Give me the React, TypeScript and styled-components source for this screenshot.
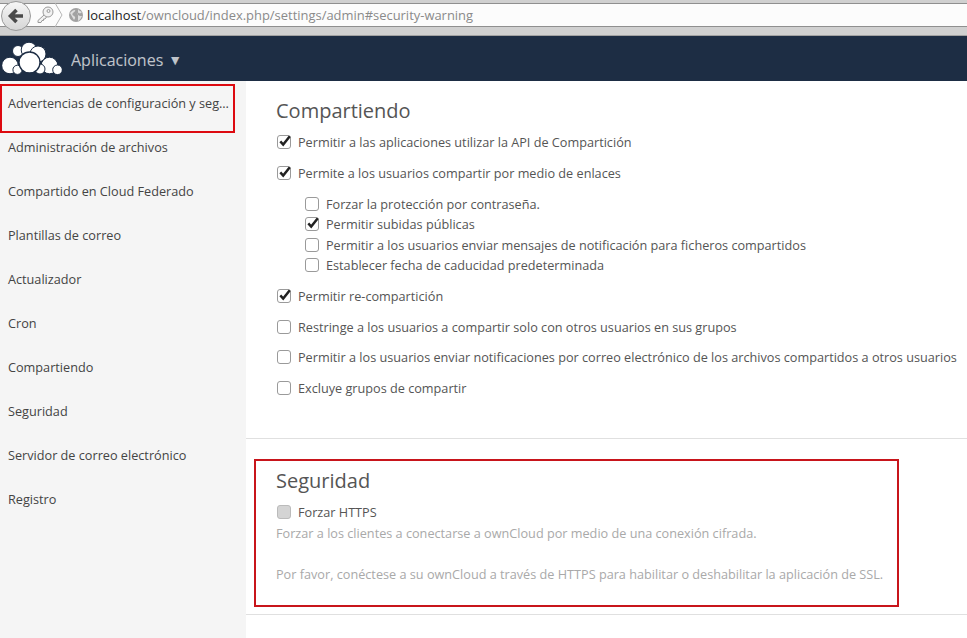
import React from "react";
import styled, { createGlobalStyle } from "styled-components";

const Global = createGlobalStyle`
  html, body { margin: 0; padding: 0; background: #fff; overflow: hidden; }
  body { font-family: "Open Sans", "Noto Sans", sans-serif; font-size: 12.68px; color: #555; }
`;
const Page = styled.div`
  position: relative; width: 967px; height: 638px; display: flex; flex-direction: column; overflow: hidden;
`;
const BrowserBar = styled.div`
  height: 36px; flex: none; box-sizing: border-box; background: #d0d0d0; border-bottom: 1px solid #a2a2a2;
  padding-top: 3px; position: relative;
`;
const UrlField = styled.div`
  height: 24px; box-sizing: border-box; background: #fcfcfc; border-top: 1px solid #8f8f8f; border-bottom: 1px solid #8f8f8f;
  display: flex; align-items: center; padding-left: 69px; gap: 4px; font-size: 12.95px; color: #8a8a8a;
`;
const UrlHost = styled.span` color: #222; `;
const BackButton = styled.div`
  position: absolute; left: 1px; top: 1px; width: 30px; height: 30px; border-radius: 50%; box-sizing: border-box;
  border: 1px solid #9a9a9a; background: linear-gradient(#f6f6f6, #d6d6d6);
  display: flex; align-items: center; justify-content: center;
`;
const KeyIcon = styled.svg` position: absolute; left: 36px; top: 5px; `;
const Chevron = styled.svg` position: absolute; left: 55px; top: 3px; `;
const Header = styled.header`
  height: 45px; flex: none; background: #1d2d44; display: flex; align-items: center; padding-left: 2px;
`;
const AppMenu = styled.div`
  margin-left: 9px; font-size: 16px; color: #fff; opacity: .72; display: flex; align-items: center; gap: 5px; padding-top: 3px;
`;
const Caret = styled.span` font-size: 14px; margin-top: -2px; `;
const Body = styled.div` flex: 1; display: flex; min-height: 0; `;
const Sidebar = styled.nav` width: 246px; flex: none; background: #f5f5f5; `;
const NavItem = styled.div`
  height: 44px; line-height: 44px; padding-left: 8px; padding-right: 16px; color: #444;
  white-space: nowrap; overflow: hidden; text-overflow: ellipsis;
`;
const Main = styled.main` flex: 1; min-width: 0; `;
const Section = styled.section<{ $h: number; $top: number }>`
  height: ${p => p.$h}px; box-sizing: border-box; padding: ${p => p.$top}px 0 0 30px; border-bottom: 1px solid #e0e0e0;
`;
const Title = styled.h2<{ $gap: number }>`
  margin: 0 0 ${p => p.$gap}px; font-size: 20px; font-weight: 400; line-height: 27px; color: #555;
`;
const Row = styled.label<{ $sub?: boolean; $gap?: number }>`
  display: flex; align-items: center; height: 20px; white-space: nowrap;
  margin-left: ${p => (p.$sub ? 29 : 1)}px; margin-top: ${p => p.$gap ?? 0}px; color: #555; gap: 7px;
`;
const Box = styled.span<{ $disabled?: boolean }>`
  width: 14px; height: 14px; flex: none; box-sizing: border-box; border-radius: 3px; position: relative;
  border: 1px solid ${p => (p.$disabled ? "#bbb" : "#9a9a9a")};
  background: ${p => (p.$disabled ? "#d4d4d4" : "#fff")};
`;
const Tick = styled.svg` position: absolute; left: -1px; top: -3px; `;
const Hint = styled.p<{ $gap: number }>`
  margin: ${p => p.$gap}px 0 0; height: 20px; line-height: 20px; color: #a9a9a9; white-space: nowrap;
`;
const Highlight = styled.div<{ $x: number; $y: number; $w: number; $h: number; $c: string }>`
  position: absolute; left: ${p => p.$x}px; top: ${p => p.$y}px; width: ${p => p.$w}px; height: ${p => p.$h}px;
  box-sizing: border-box; border: 2px solid ${p => p.$c}; pointer-events: none;
`;

const Check = ({ on, disabled }: { on?: boolean; disabled?: boolean }) => (
  <Box $disabled={disabled}>
    {on && (
      <Tick width="15" height="15" viewBox="0 0 15 15">
        <path d="M3.300 8.300 6.200 11.500 12.800 3.300" fill="none" stroke="#222" strokeWidth="2.500" />
      </Tick>
    )}
  </Box>
);

const nav = [
  "Advertencias de configuración y seguridad",
  "Administración de archivos",
  "Compartido en Cloud Federado",
  "Plantillas de correo",
  "Actualizador",
  "Cron",
  "Compartiendo",
  "Seguridad",
  "Servidor de correo electrónico",
  "Registro",
];

type Opt = { t: string; on?: boolean; sub?: boolean; gap?: number };
const opts: Opt[] = [
  { t: "Permitir a las aplicaciones utilizar la API de Compartición", on: true },
  { t: "Permite a los usuarios compartir por medio de enlaces", on: true, gap: 11 },
  { t: "Forzar la protección por contraseña.", sub: true, gap: 11 },
  { t: "Permitir subidas públicas", on: true, sub: true, gap: 0 },
  { t: "Permitir a los usuarios enviar mensajes de notificación para ficheros compartidos", sub: true, gap: 1 },
  { t: "Establecer fecha de caducidad predeterminada", sub: true, gap: 0 },
  { t: "Permitir re-compartición", on: true, gap: 11 },
  { t: "Restringe a los usuarios a compartir solo con otros usuarios en sus grupos", gap: 11 },
  { t: "Permitir a los usuarios enviar notificaciones por correo electrónico de los archivos compartidos a otros usuarios", gap: 10 },
  { t: "Excluye grupos de compartir", gap: 11 },
];

const Logo = () => (
  <svg width="60" height="34" viewBox="0 0 60 34">
    <g fill="#fff" stroke="#1d2d44" strokeWidth="1">
      <circle cx="16" cy="9" r="5.500" />
      <circle cx="27" cy="8" r="7.800" />
      <circle cx="36" cy="12" r="8" />
      <circle cx="8" cy="23.500" r="8.300" />
      <circle cx="47.500" cy="23.500" r="8.300" />
      <circle cx="55.500" cy="27.800" r="4.800" />
      <circle cx="15.500" cy="27.800" r="4.600" />
      <circle cx="38" cy="27" r="5" />
    </g>
    <circle cx="27.500" cy="20.500" r="10.500" fill="#fff" stroke="#1d2d44" strokeWidth="1.300" />
  </svg>
);

export default function App() {
  return (
    <Page>
      <Global />
      <BrowserBar>
        <UrlField>
          <svg width="14" height="14" viewBox="0 0 14 14">
            <circle cx="7" cy="7" r="7" fill="#a2a2a2" />
            <path d="M1 5c2-2 3-3 5-3 1 1-1 2-2 3s-1 2 1 3 1 3 0 4M9 1c1 2 3 2 4 3-1 1-2 2-3 1s-2 1-1 2 3 1 4 1c-1 2-2 4-4 5" fill="#dedede" />
          </svg>
          <span><UrlHost>localhost</UrlHost>/owncloud/index.php/settings/admin#security-warning</span>
        </UrlField>
        <BackButton>
          <svg width="18" height="16" viewBox="0 0 18 16">
            <path d="M16 8H5M9.500 2 3.500 8l6 6" fill="none" stroke="#4a4a4a" strokeWidth="3.600" />
          </svg>
        </BackButton>
        <KeyIcon width="19" height="19" viewBox="0 0 19 19">
          <g fill="#f2f2f2" stroke="#9a9a9a" strokeWidth="1">
            <path d="M8 10 2 15.500v2h3l1-2h1.500V14h1.500l1.500-2" />
            <circle cx="12" cy="7" r="5" />
            <circle cx="12.500" cy="6" r="1.500" fill="none" />
          </g>
        </KeyIcon>
        <Chevron width="8" height="24" viewBox="0 0 8 24">
          <path d="M0 0 7 12 0 24" fill="none" stroke="#b5b5b5" />
        </Chevron>
      </BrowserBar>
      <Header>
        <Logo />
        <AppMenu>Aplicaciones <Caret>▼</Caret></AppMenu>
      </Header>
      <Body>
        <Sidebar>
          {nav.map(n => <NavItem key={n}>{n}</NavItem>)}
        </Sidebar>
        <Main>
          <Section $h={358} $top={16}>
            <Title $gap={8}>Compartiendo</Title>
            {opts.map(o => (
              <Row key={o.t} $sub={o.sub} $gap={o.gap}>
                <Check on={o.on} />
                <span>{o.t}</span>
              </Row>
            ))}
          </Section>
          <Section $h={176} $top={28}>
            <Title $gap={8}>Seguridad</Title>
            <Row><Check disabled /><span>Forzar HTTPS</span></Row>
            <Hint $gap={1}>Forzar a los clientes a conectarse a ownCloud por medio de una conexión cifrada.</Hint>
            <Hint $gap={21}>Por favor, conéctese a su ownCloud a través de HTTPS para habilitar o deshabilitar la aplicación de SSL.</Hint>
          </Section>
        </Main>
      </Body>
      <Highlight $x={0} $y={84} $w={235} $h={49} $c="#dd0a10" />
      <Highlight $x={254} $y={459} $w={645} $h={148} $c="#c8151b" />
    </Page>
  );
}
